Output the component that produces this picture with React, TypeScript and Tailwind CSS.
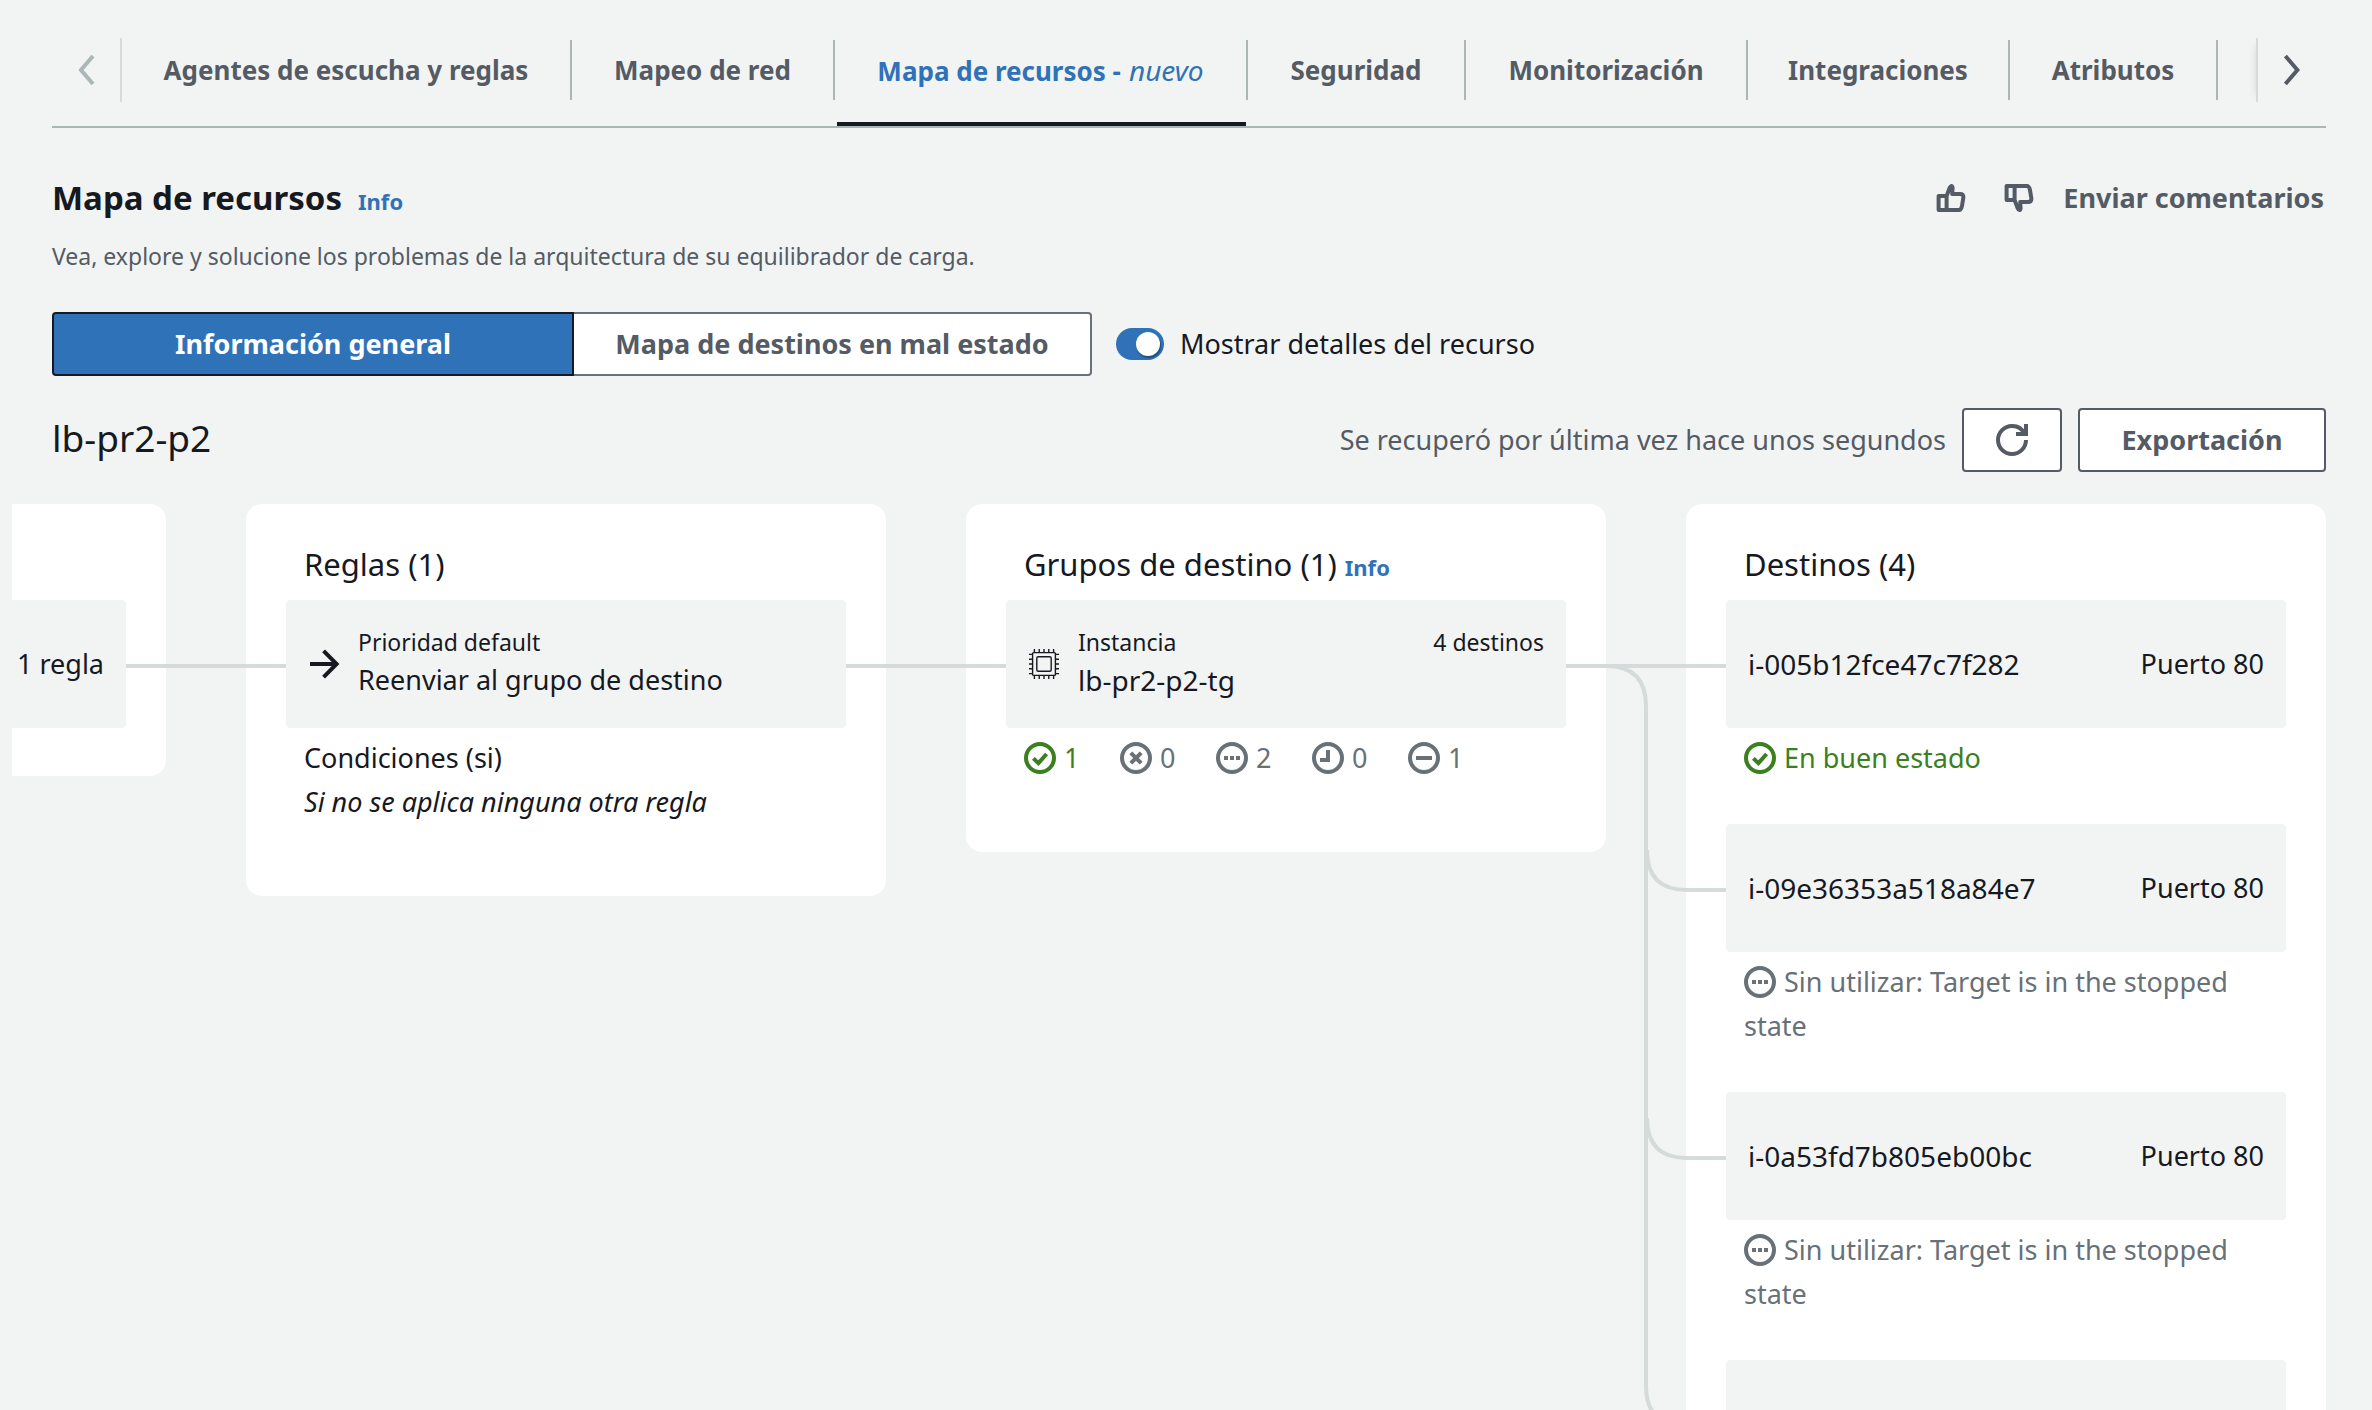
import type { ReactNode } from "react";

type IconProps = { className?: string; children: ReactNode };

function Icon({ className = "size-8", children }: IconProps) {
  return (
    <svg
      viewBox="0 0 16 16"
      fill="none"
      stroke="currentColor"
      strokeWidth={2}
      aria-hidden="true"
      className={`shrink-0 ${className}`}
    >
      {children}
    </svg>
  );
}

const statusShapes = {
  healthy: <path d="M4.7 8.2 7.2 10.6 11.3 6" />,
  unhealthy: <path d="M5.4 5.4l5.2 5.2M10.6 5.4l-5.2 5.2" />,
  unused: <path d="M4 8h2M7 8h2M10 8h2" />,
  initial: <path d="M8 4v5H4" />,
  draining: <path d="M4 8h8" />,
};

type Status = keyof typeof statusShapes;

function StatusIcon({ status, className }: { status: Status; className?: string }) {
  return (
    <Icon className={className}>
      <circle cx="8" cy="8" r="7" />
      {statusShapes[status]}
    </Icon>
  );
}

function Thumb() {
  return (
    <path
      strokeLinejoin="round"
      d="M5.8 14V7M5.8 7 7.3 3Q8.3 1 8.8 2.8L8.6 6H12.5Q14.2 6 14.2 7.6L13.5 12Q13 14 12 14H1.8V7H5.8"
    />
  );
}

function Chip() {
  const pins = [5.4, 10.2, 15, 19.8, 24.6];
  return (
    <svg viewBox="0 0 30 30" fill="none" stroke="currentColor" strokeWidth="1.4" aria-hidden="true" className="mx-px size-[30px] shrink-0">
      <rect x="3.6" y="3.6" width="22.8" height="22.8" rx="1" />
      <rect x="7.8" y="7.8" width="14.4" height="14.4" rx="1.5" />
      {pins.map((p) => (
        <path key={p} d={`M${p} 0v3.6M${p} 26.4v3.6M0 ${p}h3.6M26.4 ${p}h3.6`} />
      ))}
    </svg>
  );
}

const tabs: { label: string; width: string; active?: boolean }[] = [
  { label: "Agentes de escucha y reglas", width: "w-[450px]" },
  { label: "Mapeo de red", width: "w-[263px]" },
  { label: "Mapa de recursos -", width: "w-[413px]", active: true },
  { label: "Seguridad", width: "w-[218px]" },
  { label: "Monitorización", width: "w-[282px]" },
  { label: "Integraciones", width: "w-[262px]" },
  { label: "Atributos", width: "w-[208px]" },
];

function TabBar() {
  return (
    <nav className="mr-[46px] ml-[52px] flex border-b-2 border-[#abb7b7] pt-[38px]">
      <button aria-label="Anterior" className="flex h-16 w-[70px] items-center justify-center border-r-2 border-[#d5dbdb] text-[#abb7b7]">
        <Icon>
          <path d="M11.5 1l-6 7 6 7" />
        </Icon>
      </button>
      <div role="tablist" className="flex min-w-0 grow overflow-hidden">
        {tabs.map((tab) => (
          <button
            key={tab.label}
            role="tab"
            aria-selected={!!tab.active}
            className={`relative h-[88px] shrink-0 pb-6 text-[26px] font-bold whitespace-nowrap ${tab.width} ${tab.active ? "text-[#3072b7]" : "text-[#545b64]"}`}
          >
            <span className="flex h-[60px] items-baseline justify-center gap-2 border-r-2 border-[#abb7b7] leading-[60px]">
              {tab.label}
              {tab.active && <em className="text-[28px] font-normal">nuevo</em>}
            </span>
            {tab.active && <span className="absolute right-0.5 bottom-0 left-0.5 h-1 bg-[#16191f]" />}
          </button>
        ))}
      </div>
      <button aria-label="Siguiente" className="flex h-16 w-[70px] items-center justify-center border-l-2 border-[#d5dbdb] text-[#545b64] shadow-[-8px_0_8px_-8px_rgba(0,0,0,0.12)]">
        <Icon>
          <path d="M4.7 1l6 7-6 7" />
        </Icon>
      </button>
    </nav>
  );
}

function Info() {
  return (
    <a href="#info" className="text-[22px] leading-8 font-bold text-[#3072b7]">
      Info
    </a>
  );
}

function Card({ title, children }: { title: ReactNode; children: ReactNode }) {
  return (
    <section className="w-[640px] shrink-0 rounded-2xl bg-white px-10 pb-7">
      <h3 className="flex h-24 items-baseline gap-2 pt-9 pl-[18px] text-[31px] leading-[48px]">{title}</h3>
      {children}
    </section>
  );
}

function Box({ children, className = "" }: { children?: ReactNode; className?: string }) {
  return <div className={`relative flex h-32 items-center rounded bg-[#f2f4f3] px-[22px] ${className}`}>{children}</div>;
}

function Link() {
  return <span className="absolute top-16 left-full h-1 w-40 bg-[#d5dbdb]" />;
}

function TargetLinks() {
  return (
    <svg width="160" height="830" fill="none" stroke="#d5dbdb" strokeWidth="4" aria-hidden="true" className="absolute top-0 left-full">
      <path d="M0 66H160M40 66Q80 66 80 106V786Q80 826 120 826H160" />
      <path d="M81 250Q81 290 121 290H160M81 518Q81 558 121 558H160" />
    </svg>
  );
}

const counts: [Status, number][] = [
  ["healthy", 1],
  ["unhealthy", 0],
  ["unused", 2],
  ["initial", 0],
  ["draining", 1],
];

const targets: { id: string; status: Status; text: string }[] = [
  { id: "i-005b12fce47c7f282", status: "healthy", text: "En buen estado" },
  { id: "i-09e36353a518a84e7", status: "unused", text: "Sin utilizar: Target is in the stopped state" },
  { id: "i-0a53fd7b805eb00bc", status: "unused", text: "Sin utilizar: Target is in the stopped state" },
];

function tone(status: Status) {
  return status === "healthy" ? "text-[#3b7f1f]" : "text-[#687078]";
}

function ResourceMap() {
  return (
    <div className="mt-8 mr-[46px] ml-3 flex items-start gap-20">
      <section className="min-w-0 grow rounded-r-2xl bg-white pt-24 pr-10 pb-12">
        <Box className="justify-end rounded-l-none">
          <span className="whitespace-nowrap">1 regla</span>
          <Link />
        </Box>
      </section>

      <Card title="Reglas (1)">
        <Box>
          <Icon>
            <path d="M1 8h13M7.8 1.4 14.3 8l-6.5 6.6" />
          </Icon>
          <div className="ml-[18px]">
            <p className="text-[23px] leading-8">Prioridad default</p>
            <p>Reenviar al grupo de destino</p>
          </div>
          <Link />
        </Box>
        <div className="mt-2 mb-11 px-[18px]">
          <p>Condiciones (si)</p>
          <p className="italic">Si no se aplica ninguna otra regla</p>
        </div>
      </Card>

      <Card
        title={
          <>
            Grupos de destino (1) <Info />
          </>
        }
      >
        <Box>
          <Chip />
          <div className="ml-[18px] grow">
            <p className="flex justify-between text-[23px] leading-8">
              <span>Instancia</span>
              <span>4 destinos</span>
            </p>
            <p className="text-[28px]">lb-pr2-p2-tg</p>
          </div>
          <TargetLinks />
        </Box>
        <ul className="mt-2 mb-11 flex px-[18px]">
          {counts.map(([status, count]) => (
            <li key={status} className={`flex w-24 items-center gap-2 ${tone(status)}`}>
              <StatusIcon status={status} />
              {count}
            </li>
          ))}
        </ul>
      </Card>

      <Card title="Destinos (4)">
        {targets.map((target) => (
          <div key={target.id}>
            <Box className="justify-between">
              <span className="text-[28px]">{target.id}</span>
              <span>Puerto 80</span>
            </Box>
            <p className={`mt-2 mb-11 px-[18px] ${tone(target.status)}`}>
              <StatusIcon status={target.status} className="mr-2 inline size-8 align-[-6px]" />
              {target.text}
            </p>
          </div>
        ))}
        <Box />
      </Card>
    </div>
  );
}

export default function App() {
  return (
    <main className="h-screen overflow-hidden bg-[#f2f4f3] font-['Noto_Sans',sans-serif] text-[27px] leading-[44px] text-[#16191f]">
      <TabBar />

      <div className="mr-[46px] ml-[52px]">
        <header className="mt-12 flex items-center justify-between">
          <h1 className="flex items-baseline gap-4 text-[33px] leading-[44px] font-bold">
            Mapa de recursos <Info />
          </h1>
          <div className="flex items-center pr-0.5 text-[#545b64]">
            <button aria-label="Me gusta" className="mr-9">
              <Icon>
                <Thumb />
              </Icon>
            </button>
            <button aria-label="No me gusta" className="mr-7">
              <Icon>
                <g transform="matrix(1 0 0 -1 0 16)">
                  <Thumb />
                </g>
              </Icon>
            </button>
            <a href="#comentarios" className="font-bold">
              Enviar comentarios
            </a>
          </div>
        </header>
        <p className="mt-5 text-[23px] leading-8 text-[#545b64]">
          Vea, explore y solucione los problemas de la arquitectura de su equilibrador de carga.
        </p>

        <div className="mt-10 flex items-center">
          <button className="h-16 w-[522px] rounded-l border-2 border-[#16191f] bg-[#3072b7] font-bold text-white">
            Información general
          </button>
          <button className="h-16 w-[518px] rounded-r border-2 border-l-0 border-[#687078] bg-white font-bold text-[#545b64]">
            Mapa de destinos en mal estado
          </button>
          <label className="ml-6 flex items-center gap-4">
            <input
              type="checkbox"
              role="switch"
              defaultChecked
              className="flex h-8 w-12 appearance-none items-center justify-end rounded-full bg-[#3072b7] px-1 before:size-6 before:rounded-full before:bg-white before:shadow-[1px_2px_2px_rgba(0,0,0,0.35)] before:content-['']"
            />
            Mostrar detalles del recurso
          </label>
        </div>

        <div className="mt-8 flex items-center">
          <h2 className="grow pb-1 text-[37px]">lb-pr2-p2</h2>
          <span className="mr-4 text-[#545b64]">Se recuperó por última vez hace unos segundos</span>
          <button aria-label="Actualizar" className="mr-4 flex h-16 w-[100px] items-center justify-center rounded border-2 border-[#545b64] bg-white text-[#545b64]">
            <Icon>
              <path d="M10 5h5V0" />
              <path d="M15 8a7 7 0 0 1-14 0 7 7 0 0 1 7-7 6.87 6.87 0 0 1 6.3 4" />
            </Icon>
          </button>
          <button className="h-16 w-[248px] rounded border-2 border-[#545b64] bg-white font-bold text-[#545b64]">
            Exportación
          </button>
        </div>
      </div>

      <ResourceMap />
    </main>
  );
}
